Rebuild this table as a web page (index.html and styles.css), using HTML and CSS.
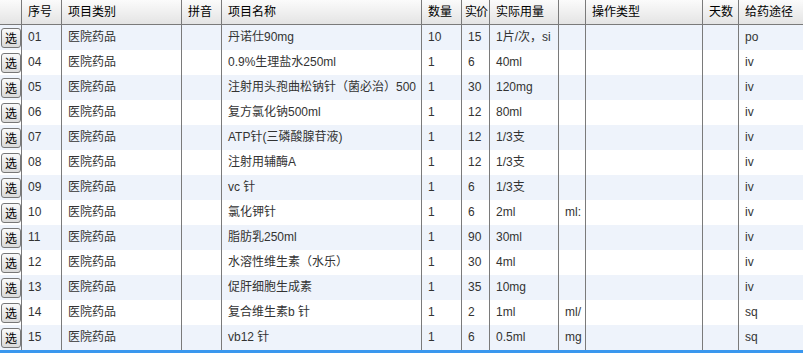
FILE: index.html
```html
<!DOCTYPE html>
<html lang="zh-CN">
<head>
<meta charset="utf-8">
<title>项目列表</title>
<link rel="stylesheet" href="styles.css">
</head>
<body>
<div class="grid">
  <div class="row head">
    <div class="c"></div>
    <div class="c">序号</div>
    <div class="c">项目类别</div>
    <div class="c">拼音</div>
    <div class="c">项目名称</div>
    <div class="c">数量</div>
    <div class="c tight">实价</div>
    <div class="c">实际用量</div>
    <div class="c"></div>
    <div class="c">操作类型</div>
    <div class="c">天数</div>
    <div class="c">给药途径</div>
  </div>

  <div class="row alt"><div class="c sel"><button class="pick">选</button></div><div class="c">01</div><div class="c">医院药品</div><div class="c"></div><div class="c">丹诺仕90mg</div><div class="c">10</div><div class="c">15</div><div class="c">1片/次，si</div><div class="c"></div><div class="c"></div><div class="c"></div><div class="c">po</div></div>
  <div class="row"><div class="c sel"><button class="pick">选</button></div><div class="c">04</div><div class="c">医院药品</div><div class="c"></div><div class="c">0.9%生理盐水250ml</div><div class="c">1</div><div class="c">6</div><div class="c">40ml</div><div class="c"></div><div class="c"></div><div class="c"></div><div class="c">iv</div></div>
  <div class="row alt"><div class="c sel"><button class="pick">选</button></div><div class="c">05</div><div class="c">医院药品</div><div class="c"></div><div class="c">注射用头孢曲松钠针（菌必治）500</div><div class="c">1</div><div class="c">30</div><div class="c">120mg</div><div class="c"></div><div class="c"></div><div class="c"></div><div class="c">iv</div></div>
  <div class="row"><div class="c sel"><button class="pick">选</button></div><div class="c">06</div><div class="c">医院药品</div><div class="c"></div><div class="c">复方氯化钠500ml</div><div class="c">1</div><div class="c">12</div><div class="c">80ml</div><div class="c"></div><div class="c"></div><div class="c"></div><div class="c">iv</div></div>
  <div class="row alt"><div class="c sel"><button class="pick">选</button></div><div class="c">07</div><div class="c">医院药品</div><div class="c"></div><div class="c">ATP针(三磷酸腺苷液)</div><div class="c">1</div><div class="c">12</div><div class="c">1/3支</div><div class="c"></div><div class="c"></div><div class="c"></div><div class="c">iv</div></div>
  <div class="row"><div class="c sel"><button class="pick">选</button></div><div class="c">08</div><div class="c">医院药品</div><div class="c"></div><div class="c">注射用辅酶A</div><div class="c">1</div><div class="c">12</div><div class="c">1/3支</div><div class="c"></div><div class="c"></div><div class="c"></div><div class="c">iv</div></div>
  <div class="row alt"><div class="c sel"><button class="pick">选</button></div><div class="c">09</div><div class="c">医院药品</div><div class="c"></div><div class="c">vc 针</div><div class="c">1</div><div class="c">6</div><div class="c">1/3支</div><div class="c"></div><div class="c"></div><div class="c"></div><div class="c">iv</div></div>
  <div class="row"><div class="c sel"><button class="pick">选</button></div><div class="c">10</div><div class="c">医院药品</div><div class="c"></div><div class="c">氯化钾针</div><div class="c">1</div><div class="c">6</div><div class="c">2ml</div><div class="c">ml:</div><div class="c"></div><div class="c"></div><div class="c">iv</div></div>
  <div class="row alt"><div class="c sel"><button class="pick">选</button></div><div class="c">11</div><div class="c">医院药品</div><div class="c"></div><div class="c">脂肪乳250ml</div><div class="c">1</div><div class="c">90</div><div class="c">30ml</div><div class="c"></div><div class="c"></div><div class="c"></div><div class="c">iv</div></div>
  <div class="row"><div class="c sel"><button class="pick">选</button></div><div class="c">12</div><div class="c">医院药品</div><div class="c"></div><div class="c">水溶性维生素（水乐）</div><div class="c">1</div><div class="c">30</div><div class="c">4ml</div><div class="c"></div><div class="c"></div><div class="c"></div><div class="c">iv</div></div>
  <div class="row alt"><div class="c sel"><button class="pick">选</button></div><div class="c">13</div><div class="c">医院药品</div><div class="c"></div><div class="c">促肝细胞生成素</div><div class="c">1</div><div class="c">35</div><div class="c">10mg</div><div class="c"></div><div class="c"></div><div class="c"></div><div class="c">iv</div></div>
  <div class="row"><div class="c sel"><button class="pick">选</button></div><div class="c">14</div><div class="c">医院药品</div><div class="c"></div><div class="c">复合维生素b 针</div><div class="c">1</div><div class="c">2</div><div class="c">1ml</div><div class="c">ml/</div><div class="c"></div><div class="c"></div><div class="c">sq</div></div>
  <div class="row alt"><div class="c sel"><button class="pick">选</button></div><div class="c">15</div><div class="c">医院药品</div><div class="c"></div><div class="c">vb12 针</div><div class="c">1</div><div class="c">6</div><div class="c">0.5ml</div><div class="c">mg</div><div class="c"></div><div class="c"></div><div class="c">sq</div></div>
</div>
<div class="bar"></div>
</body>
</html>
```

FILE: styles.css
```css
html, body {
  margin: 0;
  padding: 0;
  overflow: hidden;
  background: #fff;
}
body {
  width: 803px;
  height: 353px;
  font-family: "Liberation Sans", "Noto Sans CJK SC", sans-serif;
  font-size: 12px;
  color: #333;
}
.grid {
  width: 830px;
}
.row {
  display: grid;
  grid-template-columns: 22px 40px 120px 40px 200px 40px 28px 69px 27px 117px 36px 80px;
  height: 25px;
  background: #fff;
}
.row.alt {
  background: #eef3fb;
}
.row.head {
  background: linear-gradient(#fbfbfb, #e4e4e4);
  border-bottom: 1px solid #7a7a7a;
  box-sizing: border-box;
  color: #000;
}
.c {
  box-sizing: border-box;
  border-right: 1px solid #7a7a7a;
  padding-left: 6px;
  overflow: hidden;
  white-space: nowrap;
  line-height: 25px;
}
.head .c {
  line-height: 24px;
}
.head .c.tight {
  padding-left: 3px;
  letter-spacing: -1px;
}
.c.sel {
  padding: 0;
  display: flex;
  align-items: center;
}
.pick {
  width: 20px;
  height: 20px;
  margin: 0 0 0 1px;
  padding: 0;
  border: 1px solid #777;
  border-radius: 3px;
  background: linear-gradient(#fafafa, #dadada);
  font-family: "Noto Sans CJK SC", sans-serif;
  font-size: 12px;
  line-height: 18px;
  color: #000;
}
.bar {
  height: 3px;
  background: #3a97ee;
}
```
